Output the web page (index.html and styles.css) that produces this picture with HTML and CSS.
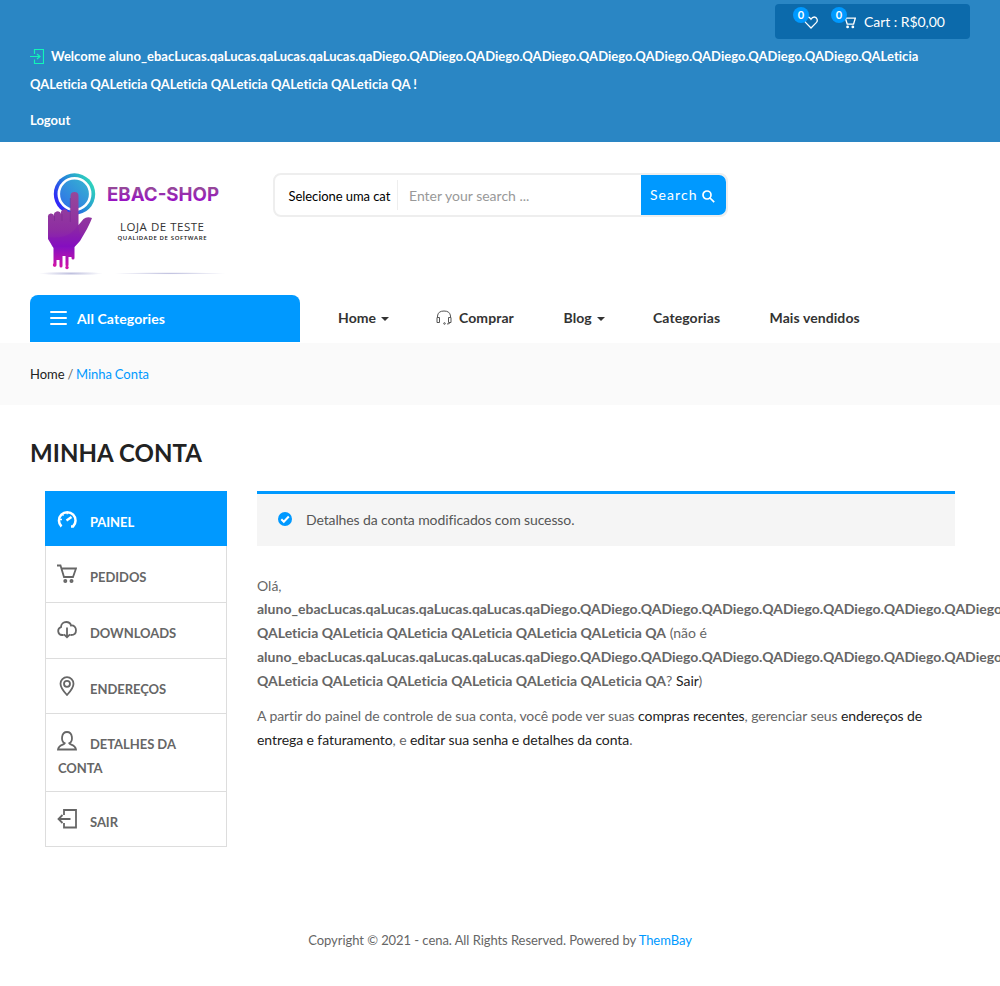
FILE: index.html
```html
<!DOCTYPE html>
<html lang="pt-BR">
<head>
<meta charset="utf-8">
<title>Minha Conta</title>
<link rel="stylesheet" href="styles.css">
</head>
<body>
<header class="topbar">
  <div class="cart-row">
    <div class="cart-box">
      <a class="tool"><span class="badge">0</span><svg class="heart" viewBox="0 0 14 13"><path d="M7 12 1.500 6.400C.1 4.900.7 1 3.700 1 5.500 1 6.500 2.300 7 3.200 7.500 2.300 8.500 1 10.300 1c3 0 3.600 3.900 2.200 5.400Z"/></svg></a>
      <a class="tool"><span class="badge">0</span><svg class="minicart" viewBox="0 0 20 20"><path d="M0 2h4l3.500 11h9L19 4.500H5"/><circle cx="8" cy="17" r="1"/><circle cx="15.500" cy="17" r="1"/></svg></a>
      <span class="cart-label">Cart : R$0,00</span>
    </div>
  </div>
  <p class="welcome"><svg class="login" viewBox="0 0 14 15"><path d="M4.500 5V.5h9v14h-9v-4M0 7.500h9.500M7 5l3 2.500L7 10"/></svg>Welcome aluno_ebacLucas.qaLucas.qaLucas.qaLucas.qaDiego.QADiego.QADiego.QADiego.QADiego.QADiego.QADiego.QADiego.QADiego.QALeticia<br>QALeticia QALeticia QALeticia QALeticia QALeticia QALeticia QA !</p>
  <a class="logout">Logout</a>
</header>

<section class="masthead">
  <svg class="logo" viewBox="0 0 220 125">
    <defs>
      <linearGradient id="ring" x1="0" y1=".8" x2="1" y2=".2"><stop offset="0" stop-color="#3210ff"/><stop offset=".5" stop-color="#2588d8"/><stop offset="1" stop-color="#30e0b8"/></linearGradient>
      <linearGradient id="disc" x1="0" y1="1" x2="1" y2="0"><stop offset="0" stop-color="#2f6bea"/><stop offset="1" stop-color="#36b8cf"/></linearGradient>
      <linearGradient id="skin" x1="0" y1="0" x2="0" y2="1"><stop offset="0" stop-color="#96489a"/><stop offset=".5" stop-color="#8e2da2"/><stop offset=".73" stop-color="#8610c0"/><stop offset="1" stop-color="#d014a8"/></linearGradient>
      <radialGradient id="shade"><stop offset="0" stop-color="#bfc0df"/><stop offset="1" stop-color="#fff"/></radialGradient>
      <linearGradient id="brand" x1="0" y1="0" x2="0" y2="1"><stop offset=".2" stop-color="#96489a"/><stop offset=".85" stop-color="#980cc8"/></linearGradient>
    </defs>
    <circle cx="54.500" cy="34" r="20.700" fill="url(#ring)"/>
    <circle cx="54.500" cy="34" r="15.700" fill="url(#disc)" stroke="#fff" stroke-width="2.600"/>
    <ellipse cx="51" cy="113.500" rx="32" ry="2" fill="url(#shade)"/>
    <ellipse cx="150" cy="113.400" rx="56" ry="1.200" fill="url(#shade)"/>
    <path fill="url(#skin)" d="M50.500 36a4 4 0 0 1 8 0V65l5-6Q67 56 72 58 71 61 67 69L60 81 54.500 87V98a1.500 1.500 0 0 1-3 0V97h-3v8a1.500 1.500 0 0 1-3 0v-9h-3v10a1.500 1.500 0 0 1-3 0V100h-3v5a1.500 1.500 0 0 1-3 0V88L28 79V57a3 3 0 0 1 6-1 3.200 3.200 0 0 1 7-2 3.200 3.200 0 0 1 7-2 3 3 0 0 1 2.500 0Z"/>
    <path d="M34.500 56v5M42 54v7M50.300 38v24" fill="none" stroke="#78298f" stroke-width=".6"/>
    <path d="M29 77Q49 80 58 65L61 79 54 87H32Z" fill="#7d00c5" opacity=".17"/>
    <circle cx="34.500" cy="105" r="1.700" fill="#d014a8"/><circle cx="47" cy="107.500" r="1.700" fill="#d014a8"/>
    <text class="brand" x="87" y="41" textLength="112" lengthAdjust="spacingAndGlyphs" fill="url(#brand)">EBAC-SHOP</text>
    <text class="tag" x="100" y="71" textLength="84">LOJA DE TESTE</text>
    <text class="subtag" x="97.500" y="79.500" textLength="89">QUALIDADE DE SOFTWARE</text>
  </svg>
  <form class="search">
    <span class="category">Selecione uma cat</span>
    <span class="query">Enter your search ...</span>
    <span class="submit">Search<svg viewBox="0 0 13 13"><circle cx="5" cy="5" r="4"/><path d="m8 8 4.200 4.200"/></svg></span>
  </form>
</section>

<nav class="nav">
  <div class="all"><span class="bars"><i></i><i></i><i></i></span>All Categories</div>
  <a class="drop n1">Home</a>
  <a class="n2"><svg class="headset" viewBox="0 0 16 15"><path d="M1.500 8V6Q2 1 8 1t6.500 5v2M1 7.500h2.500v5H1ZM12.500 7.500H15v5h-2.500ZM14 12.500q0 1.500-3 1.500"/><circle cx="8.500" cy="13.500" r=".8"/></svg>Comprar</a>
  <a class="drop n3">Blog</a>
  <a class="n4">Categorias</a>
  <a class="n5">Mais vendidos</a>
</nav>
<div class="crumbs"><span>Home</span> / <a>Minha Conta</a></div>

<main class="main">
  <h1 class="title">MINHA CONTA</h1>
  <div class="columns">
    <ul class="menu">
      <li class="active"><svg viewBox="0 0 20 20"><path d="M4.500 17.500a8.300 8.300 0 1 1 11.500 0h-2" stroke-width="2.500"/><path d="m9.500 11.500 5-3.500" stroke-width="2.300"/><path d="M10.200 3v2.300M5.500 5.500l1 1.200M3 10.500h2" stroke-width="1.300"/></svg>PAINEL</li>
      <li class="h57"><svg viewBox="0 0 20 20"><path d="M0 1.500h3.500L7 13h9l3-8.500H5"/><circle cx="8.300" cy="17" r="1.100"/><circle cx="14.500" cy="17" r="1.100"/></svg>PEDIDOS</li>
      <li class="h56"><svg viewBox="0 0 20 20"><path d="M6.500 15H5a4 4 0 0 1-1-7.800C4 3.800 6.500 2 9.200 2c2.500 0 4.300 1.500 4.800 3.500C17 5 19 7.500 19 10.200c0 2.800-2 4.800-5 4.800h-.5M10 7.500v9.500M7 14.300l3 3 3-3"/></svg>DOWNLOADS</li>
      <li class="h55"><svg viewBox="0 0 20 20"><path d="M10 19Q3.500 12 3.500 7.700a6.500 6.500 0 0 1 13 0Q16.500 12 10 19Z"/><circle cx="10" cy="7.800" r="3"/></svg>ENDEREÇOS</li>
      <li class="h78"><svg viewBox="0 0 20 20"><path d="M7.800 12.300C3.500 10 4.200 1 10 1s6.500 9 2.200 11.300c.5 1.600 6.300 1.300 6.800 6.200H1c.5-4.900 6.300-4.600 6.800-6.200Z"/></svg>DETALHES DA CONTA</li>
      <li class="h55"><svg viewBox="0 0 20 20"><path d="M7 6V1h12v17.500H7V14M13.500 10h-12M5.500 6l-4 4 4 4"/></svg>SAIR</li>
    </ul>
    <div class="content">
      <div class="notice"><svg viewBox="0 0 14 14"><circle cx="7" cy="7" r="7"/><path d="m3.300 7.300 2.500 2.500 5-5.300"/></svg>Detalhes da conta modificados com sucesso.</div>
      <p class="hello"><span class="greet">Olá,</span><b>aluno_ebacLucas.qaLucas.qaLucas.qaLucas.qaDiego.QADiego.QADiego.QADiego.QADiego.QADiego.QADiego.QADiego.QADiego.QALeticia<br>QALeticia QALeticia QALeticia QALeticia QALeticia QALeticia QA</b> (não é<br><b>aluno_ebacLucas.qaLucas.qaLucas.qaLucas.qaDiego.QADiego.QADiego.QADiego.QADiego.QADiego.QADiego.QADiego.QADiego.QALeticia<br>QALeticia QALeticia QALeticia QALeticia QALeticia QALeticia QA</b>? <a>Sair</a>)</p>
      <p class="info">A partir do painel de controle de sua conta, você pode ver suas <a>compras recentes</a>, gerenciar seus <a>endereços de<br>entrega e faturamento</a>, e <a>editar sua senha e detalhes da conta</a>.</p>
    </div>
  </div>
</main>
<footer class="footer">Copyright © 2021 - cena. All Rights Reserved. Powered by <a>ThemBay</a></footer>
</body>
</html>
```
FILE: styles.css
```css
* { box-sizing: border-box; }
html { overflow: hidden; }
body {
  margin: 0;
  height: 986px;
  overflow: hidden;
  background: #fff;
  color: #666;
  font: 14px/24px Lato, "Liberation Sans", sans-serif;
}
svg { fill: none; flex: none; }
p, h1, ul { margin: 0; padding: 0; }

.topbar { height: 142px; padding: 4px 30px 0; background: #2a86c4; color: #fff; }
.cart-row { display: flex; justify-content: flex-end; }
.cart-box {
  display: flex; align-items: center;
  width: 195px; height: 35px; padding-left: 29px;
  background: #0c6aab; border-radius: 4px;
}
.tool { position: relative; display: flex; }
.tool + .tool { margin-left: 24px; }
.tool svg { margin-top: 1px; stroke: #fff; }
.heart { width: 14px; height: 13px; stroke-width: 1.300; }
.minicart { width: 14px; height: 14px; stroke-width: 2; }
.badge {
  position: absolute; left: -11px; top: -7.500px;
  width: 16px; height: 16px; border-radius: 50%;
  background: #09f; font-size: 11px; line-height: 16px; font-weight: 700; text-align: center;
}
.cart-label { margin-left: 8px; white-space: nowrap; letter-spacing: -.05px; }
.welcome { padding-top: 3px; font-size: 13px; font-weight: 700; line-height: 28px; white-space: nowrap; letter-spacing: .022px; }
.login { width: 14px; height: 15px; margin-right: 7px; vertical-align: -3px; stroke: #12f5b8; stroke-width: 1.200; }
.logout { display: block; margin-top: 8px; font-size: 13px; font-weight: 700; line-height: 28px; }

.masthead { display: flex; height: 153px; padding: 18px 0 0 20px; }
.logo { width: 220px; height: 125px; }
.brand { font: 700 19px Inter, sans-serif; }
.tag { font: 11.500px/1 "Open Sans", sans-serif; fill: #333; }
.subtag { font: 600 6px/1 "Open Sans", sans-serif; fill: #222; }
.search {
  display: flex; align-items: center;
  width: 455px; height: 44px; margin: 13px 0 0 33px;
  border: 2px solid #eee; border-radius: 8px;
}
.category {
  width: 123px; height: 30px; padding-left: 13.500px;
  border-right: 1px solid #eee; color: #000; font-size: 13px; line-height: 32px; white-space: nowrap; letter-spacing: -.07px;
}
.query { width: 243px; padding: 2px 0 0 11px; color: #999; }
.submit {
  display: flex; align-items: center; flex: 1; height: 40px; padding-left: 9px;
  border-radius: 0 7px 7px 0; background: #09f; color: #fff; letter-spacing: 1.050px;
}
.submit svg { width: 13px; height: 13px; margin: 2px 0 0 4px; stroke: #fff; stroke-width: 1.700; }

.nav { display: flex; height: 48px; padding-left: 30px; color: #333; font-weight: 700; line-height: 46px; }
.all {
  display: flex; align-items: center; width: 270px; height: 47px; padding-left: 20px;
  border-radius: 8px 8px 0 0; background: #09f; color: #fff; line-height: 48px; letter-spacing: .1px;
}
.bars { display: grid; gap: 4px; width: 17px; margin: -2px 10px 0 0; }
.bars i { height: 2px; border-radius: 1px; background: #fff; }
.nav a { display: flex; align-items: center; height: 46px; white-space: nowrap; letter-spacing: .09px; }
.n1 { width: 99px; margin-left: 38px; }
.n2 { width: 126.500px; }
.n3 { width: 89.500px; }
.n4 { width: 116.500px; }
.drop::after { content: ""; margin: 2px 0 0 5px; border: 4px solid transparent; border-top-color: #333; border-bottom: 0; }
.headset { width: 16px; height: 15px; margin: -2px 7px 0 -1px; stroke: #555; }

.crumbs { height: 62px; padding: 19px 30px; background: #fafafa; font-size: 13px; word-spacing: -.6px; }
.crumbs span { color: #222; }
.crumbs a, .footer a { color: #09f; }

.main { height: 523px; padding: 33px 30px 0; }
.title { color: #222; font-size: 24px; line-height: 30px; letter-spacing: .08px; }
.columns { display: flex; gap: 30px; margin: 23px 0 0 15px; }
.menu { width: 182px; flex: none; list-style: none; font-size: 13px; font-weight: 700; letter-spacing: -.05px; }
.menu li { height: 56px; padding: 17px 12px 0; border: 1px solid #ddd; border-top: 0; }
.menu .active { height: 55px; padding-top: 18px; border-color: #09f; background: #09f; color: #fff; }
.menu .h57 { height: 57px; padding-top: 18px; }
.menu .h55 { height: 55px; }
.menu .h78 { height: 78px; }
.menu svg { width: 20px; height: 20px; margin: 0 13px 0 -1px; vertical-align: -2px; stroke: currentColor; stroke-width: 1.800; }
.content { width: 698px; flex: none; }
.notice {
  display: flex; align-items: center; height: 55px; padding: 0 0 1px 21px;
  border-top: 3px solid #09f; background: #f5f5f5; color: #555; letter-spacing: -.11px;
}
.notice svg { width: 14px; height: 14px; margin: -2px 14px 0 0; fill: #09f; }
.notice path { fill: none; stroke: #fff; stroke-width: 2; }
.hello { padding-top: 28px; white-space: nowrap; letter-spacing: .01px; }
.greet { display: block; height: 23px; }
.info { padding-top: 11px; white-space: nowrap; letter-spacing: -.075px; }
.content a { color: #222; }
.footer { font-size: 13px; text-align: center; letter-spacing: -.06px; }
```
